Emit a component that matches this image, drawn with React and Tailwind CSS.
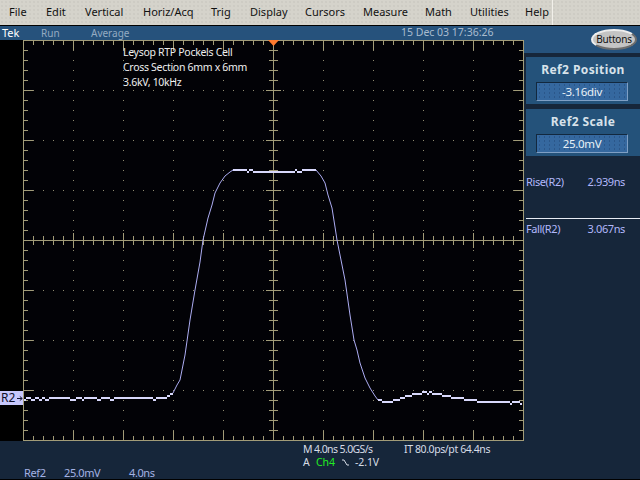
const menus = [
  ["File", "w-[37px]"],
  ["Edit", "w-[39px]"],
  ["Vertical", "w-[58px]"],
  ["Horiz/Acq", "w-[68px]"],
  ["Trig", "w-[39px]"],
  ["Display", "w-[55px]"],
  ["Cursors", "w-[58px]"],
  ["Measure", "w-[62px]"],
  ["Math", "w-[45px]"],
  ["Utilities", "w-[55px]"],
  ["Help", "w-[27px]"],
];

const range = (from, to, step) => {
  const out = [];
  for (let v = from; v <= to; v += step) out.push(v);
  return out;
};

// flat parts of the trace are drawn 2px thick, [x1, x2, y]
const flats = [
  [24, 26, 399], [26, 31, 397], [31, 35, 399], [35, 39, 397], [39, 42, 399], [42, 45, 397], [45, 49, 399], [49, 52, 397],
  [52, 70, 397], [70, 76, 399], [76, 82, 397], [82, 84, 399], [84, 97, 397], [97, 101, 399], [101, 110, 397],
  [110, 114, 399], [114, 153, 397], [153, 156, 399], [156, 167, 397], [167, 170, 395], [170, 173, 393],
  [233, 247, 169], [247, 249, 171], [249, 253, 169], [253, 295, 171], [295, 297, 169], [297, 302, 171], [302, 316, 169],
  [378, 382, 399], [382, 393, 401], [393, 400, 399], [400, 405, 397], [405, 412, 395], [412, 422, 393], [422, 427, 391],
  [427, 429, 393], [429, 432, 391], [432, 442, 393], [442, 451, 395], [451, 464, 397], [464, 477, 399], [477, 510, 401],
  [510, 512, 403], [512, 520, 401], [520, 522, 403],
];

const rise = "173,393 177,385 180,380 185,355 190,320 195,290 200,262 203,240 208,218 212,205 215,193 220,183 225,176 230,172 233,170";
const fall = "316,170 321,176 325,183 328,195 332,208 335,227 337,240 341,260 345,280 350,315 354,340 357,350 360,363 365,378 370,388 375,396 378,400";

function Scope() {
  const line = "#a29c78";
  const xs = range(33, 513, 10);
  const ys = range(50, 430, 10);
  const isMajorX = (x) => (x - 23) % 50 === 0;
  const isMajorY = (y) => (y - 40) % 50 === 0;
  return (
    <svg viewBox="23 40 501 401" width="501" height="401" shapeRendering="crispEdges" className="block">
      <rect x="23" y="40" width="501" height="401" fill="#020206" />
      {range(73, 473, 50).map((x) =>
        ys.map((y) => (x === 273 ? null : <rect key={`a${x}-${y}`} x={x} y={y} width="1" height="1" fill="#8f8a70" />))
      )}
      {range(90, 390, 50).map((y) =>
        xs.map((x) => (y === 240 ? null : <rect key={`b${x}-${y}`} x={x} y={y} width="1" height="1" fill="#8f8a70" />))
      )}
      <rect x="23" y="40" width="501" height="1" fill={line} />
      <rect x="23" y="440" width="501" height="1" fill={line} />
      <rect x="23" y="40" width="1" height="401" fill={line} />
      <rect x="523" y="40" width="1" height="401" fill={line} />
      <rect x="23" y="240" width="501" height="1" fill={line} />
      <rect x="273" y="40" width="1" height="401" fill={line} />
      {xs.map((x) => {
        const len = isMajorX(x) ? 10 : 5;
        const half = isMajorX(x) ? 7 : 4;
        return (
          <g key={x} fill={line}>
            <rect x={x} y="40" width="1" height={len} />
            <rect x={x} y={441 - len} width="1" height={len} />
            <rect x={x} y={240 - half} width="1" height={half * 2 + 1} />
          </g>
        );
      })}
      {ys.map((y) => {
        const len = isMajorY(y) ? 10 : 5;
        const half = isMajorY(y) ? 7 : 4;
        return (
          <g key={y} fill={line}>
            <rect x="23" y={y} width={len} height="1" />
            <rect x={524 - len} y={y} width={len} height="1" />
            <rect x={273 - half} y={y} width={half * 2 + 1} height="1" />
          </g>
        );
      })}
      <polygon points="268,40 279,40 273.5,46" fill="#ff7a2e" shapeRendering="auto" />
      <polyline points={rise} fill="none" stroke="#acacf2" strokeWidth="1" shapeRendering="auto" />
      <polyline points={fall} fill="none" stroke="#acacf2" strokeWidth="1" shapeRendering="auto" />
      {flats.map(([a, b, y]) => (
        <rect key={`${a}-${y}`} x={a} y={y} width={b - a} height="2" fill="#d8d8fc" />
      ))}
    </svg>
  );
}

function SidePanel({ title, value }) {
  return (
    <div className="h-[47px] ml-[2px] bg-[#24527a] flex flex-col items-center">
      <div className="h-[25px] flex items-center text-[12px] font-bold tracking-[0.4px] text-[#d8e2ea]">{title}</div>
      <div className="w-[92px] h-[19px] ml-[-2px] flex items-center justify-center text-[11.5px] tracking-[-0.3px] text-[#e8f0f6] border border-t-[#12283e] border-l-[#12283e] border-r-[#7f9fc4] border-b-[#7f9fc4] bg-[#35689f] bg-[radial-gradient(circle,#2b578a_0.6px,transparent_0.8px)] bg-size-[5px_4px]">
        {value}
      </div>
    </div>
  );
}

export default function App() {
  return (
    <div className="w-[640px] h-[480px] overflow-hidden bg-[#16263a] text-[11px] [font-family:'Liberation_Sans',Arial,sans-serif]">
      <div className="h-[26px] pl-[9px] flex items-center border-b border-black bg-[#d5d3cb] bg-[radial-gradient(circle,#c5c3bb_0.6px,transparent_0.8px)] bg-size-[4px_4px] text-[#111] text-[11px]">
        {menus.map(([name, w]) => (
          <div key={name} className={w}>{name}</div>
        ))}
        <div className="w-px h-[25px] bg-[#f2f0ea]" />
      </div>

      <div className="flex h-[414px]">
        <div className="w-[524px]">
          <div className="h-[14px] flex items-center bg-[#26527c] text-[10px] text-[#94abc2]">
            <span className="w-[41px] pl-[2px] text-[11px] text-white">Tek</span>
            <span className="w-[50px]">Run</span>
            <span className="w-[310px]">Average</span>
            <span className="text-[10.5px] text-[#a9bccf]">15 Dec 03 17:36:26</span>
          </div>
          <div className="flex">
            <div className="relative w-[23px] h-[401px] bg-black">
              <div className="absolute left-0 top-[351px] w-[23px] h-[14px] bg-[#c8c8fc] flex items-center text-[12px] text-[#10102a] pl-px">
                R2
                <svg width="7" height="7" viewBox="0 0 7 7" className="ml-[2px]">
                  <path d="M0 3.5H6M3.5 1L6.5 3.5L3.5 6" fill="none" stroke="#10102a" strokeWidth="1.2" />
                </svg>
              </div>
            </div>
            <div className="relative">
              <Scope />
              <div className="absolute left-[100px] top-[5px] text-[10.5px] leading-[15px] tracking-[-0.3px] text-[#eeeeee]">
                <div>Leysop RTP Pockels Cell</div>
                <div>Cross Section 6mm x 6mm</div>
                <div>3.6kV, 10kHz</div>
              </div>
            </div>
          </div>
        </div>

        <div className="w-[116px] flex flex-col">
          <div className="h-[27px] bg-[#26527c] flex items-center justify-end pr-[3px] shrink-0">
            <div className="w-[46px] h-[21px] rounded-[50%] flex items-center justify-center bg-[#c4c4c4] border-2 border-t-[#eeeeee] border-l-[#eeeeee] border-r-[#6d6d6d] border-b-[#6d6d6d] text-[#111] text-[10px] tracking-[-0.2px]">
              Buttons
            </div>
          </div>
          <div className="h-[4px] shrink-0" />
          <SidePanel title="Ref2 Position" value="-3.16div" />
          <div className="h-[5px] shrink-0" />
          <SidePanel title="Ref2 Scale" value="25.0mV" />
          <div className="mt-[19px] ml-[2px] pb-[30px] pr-[15px] flex justify-between text-[11px] leading-[13px] tracking-[-0.4px] text-[#b2b8fa] border-b border-[#e8ecf4]">
            <span>Rise(R2)</span>
            <span>2.939ns</span>
          </div>
          <div className="mt-[3px] ml-[2px] pr-[15px] flex justify-between text-[11px] leading-[13px] tracking-[-0.4px] text-[#b2b8fa]">
            <span>Fall(R2)</span>
            <span>3.067ns</span>
          </div>
        </div>
      </div>

      <div className="h-[40px] border-b border-black text-[11px] leading-[12px]">
        <div className="h-[27px] pl-[303px] pt-[3px] text-[#d6dce6]">
          <div className="flex text-[10.5px] tracking-[-0.4px]">
            <span className="w-[101px] tracking-[-0.6px]">M 4.0ns 5.0GS/s</span>
            <span>IT 80.0ps/pt 64.4ns</span>
          </div>
          <div className="flex items-center mt-[1px] text-[10.5px] tracking-[-0.1px]">
            <span className="w-[13px]">A</span>
            <span className="w-[26px] text-[#22ee22]">Ch4</span>
            <svg width="7" height="7" viewBox="0 0 7 7" className="mr-[6px]">
              <polyline points="0,1 2,1 5,6 7,6" fill="none" stroke="#d6dce6" strokeWidth="1" />
            </svg>
            <span>-2.1V</span>
          </div>
        </div>
        <div className="pl-[24px] flex tracking-[-0.4px] text-[#a4b2e4]">
          <span className="w-[40px]">Ref2</span>
          <span className="w-[65px]">25.0mV</span>
          <span>4.0ns</span>
        </div>
      </div>
    </div>
  );
}
